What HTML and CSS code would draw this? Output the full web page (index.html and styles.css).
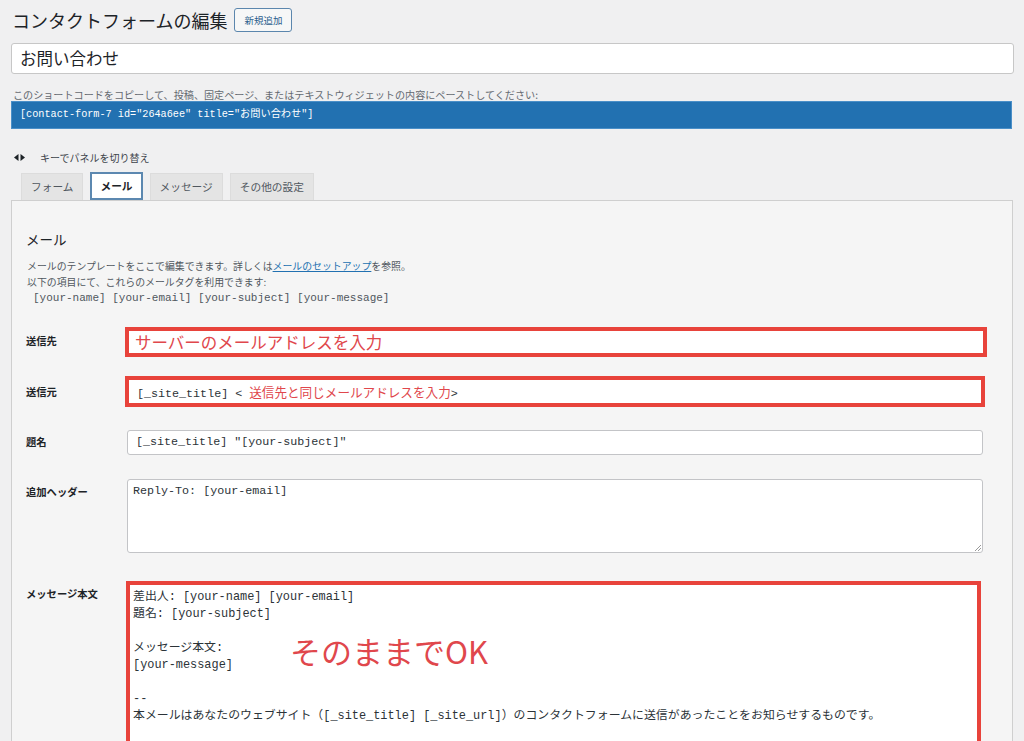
FILE: index.html
```html
<!DOCTYPE html>
<html lang="ja">
<head>
<meta charset="utf-8">
<title>コンタクトフォームの編集</title>
<link rel="stylesheet" href="styles.css">
</head>
<body>
<div class="wrap">
  <div class="page-head">
    <h1 class="page-title">コンタクトフォームの編集</h1>
    <span class="add-btn">新規追加</span>
  </div>
  <div class="title-field">お問い合わせ</div>
  <p class="shortcode-desc">このショートコードをコピーして、投稿、固定ページ、またはテキストウィジェットの内容にペーストしてください:</p>
  <div class="shortcode">[contact-form-7 id="264a6ee" title="お問い合わせ"]</div>
  <div class="key-hint">
    <svg class="key-icon" width="11" height="7" viewBox="0 0 11 7"><path d="M0 3.5 L4.5 0 L4.5 7 Z" fill="#1d2327"/><path d="M11 3.5 L6.5 0 L6.5 7 Z" fill="#1d2327"/></svg>
    <span>キーでパネルを切り替え</span>
  </div>
  <div class="tabs">
    <span class="tab">フォーム</span>
    <span class="tab active">メール</span>
    <span class="tab">メッセージ</span>
    <span class="tab">その他の設定</span>
  </div>
  <div class="panel">
    <h2 class="panel-title">メール</h2>
    <p class="panel-desc">メールのテンプレートをここで編集できます。詳しくは<a class="link">メールのセットアップ</a>を参照。<br>以下の項目にて、これらのメールタグを利用できます:</p>
    <p class="tags">[your-name] [your-email] [your-subject] [your-message]</p>

    <div class="row row-to">
      <div class="label lab-to">送信先</div>
      <div class="field hl hl-to"><span class="red-big">サーバーのメールアドレスを入力</span></div>
    </div>
    <div class="row row-from">
      <div class="label lab-from">送信元</div>
      <div class="field hl hl-from mono">[_site_title] &lt; <span class="red-mid">送信先と同じメールアドレスを入力</span>&gt;</div>
    </div>
    <div class="row row-subj">
      <div class="label lab-subj">題名</div>
      <div class="field plain mono">[_site_title] "[your-subject]"</div>
    </div>
    <div class="row row-head">
      <div class="label lab-head">追加ヘッダー</div>
      <div class="field area mono">Reply-To: [your-email]<span class="grip"></span></div>
    </div>
    <div class="row row-body">
      <div class="label lab-body">メッセージ本文</div>
      <div class="field hl hl-body mono">
        <div class="line">差出人: [your-name] [your-email]</div>
        <div class="line">題名: [your-subject]</div>
        <div class="line blank"></div>
        <div class="line">メッセージ本文:</div>
        <div class="line">[your-message]</div>
        <div class="line blank"></div>
        <div class="line">--</div>
        <div class="line">本メールはあなたのウェブサイト（[_site_title] [_site_url]）のコンタクトフォームに送信があったことをお知らせするものです。</div>
        <span class="ok-note">そのままでOK</span>
      </div>
    </div>
  </div>
</div>
</body>
</html>
```
FILE: styles.css
```css
html, body {
  margin: 0;
  padding: 0;
}
body {
  background: #f0f0f1;
  font-family: "Noto Sans CJK JP", "Noto Sans", sans-serif;
  color: #1d2327;
  height: 741px;
  overflow: hidden;
}
.wrap {
  padding: 0 10px 0 11px;
}
.page-head {
  display: flex;
  align-items: center;
  gap: 7px;
  height: 24px;
  padding-top: 8px;
}
.page-title {
  margin: 0 0 0 1px;
  font-size: 18px;
  font-weight: 400;
  line-height: 24px;
  color: #1d2327;
}
.add-btn {
  display: inline-block;
  box-sizing: border-box;
  height: 24px;
  line-height: 22px;
  padding: 0 9px;
  border: 1px solid #5b86ad;
  border-radius: 3px;
  background: #f6f7f7;
  color: #2a5d8c;
  font-size: 9.5px;
}
.title-field {
  margin-top: 11px;
  box-sizing: border-box;
  height: 31px;
  line-height: 29px;
  border: 1px solid #c7c7c7;
  border-radius: 3px;
  background: #fff;
  padding-left: 8px;
  font-size: 16.5px;
  width: 1003px;
}
.shortcode-desc {
  margin: 14px 0 0 2px;
  font-size: 10.1px;
  line-height: 14px;
  color: #646970;
}
.shortcode {
  margin-top: -1px;
  box-sizing: border-box;
  height: 28px;
  line-height: 26px;
  width: 1001px;
  background: #2271b1;
  border: 1px solid #4a8fc8;
  color: #fff;
  padding-left: 8px;
  font-family: "Liberation Mono", "Noto Sans CJK JP", monospace;
  font-size: 10.2px;
}
.key-hint {
  display: flex;
  align-items: center;
  margin-top: 21px;
  height: 14px;
  font-size: 10px;
  color: #3c434a;
}
.key-icon {
  margin-left: 3px;
  margin-right: 15px;
}
.tabs {
  display: flex;
  gap: 7px;
  margin-top: 8px;
  padding-left: 10px;
  height: 28px;
  align-items: flex-end;
}
.tab {
  box-sizing: border-box;
  height: 27px;
  line-height: 25px;
  padding: 0 9px;
  background: #e4e4e4;
  border: 1px solid #dcdcdc;
  border-bottom: none;
  font-size: 10.7px;
  color: #50575e;
}
.tab.active {
  height: 28px;
  background: #fff;
  border: 2px solid #5c88b0;
  color: #1d2327;
  font-weight: 700;
  line-height: 24px;
  padding: 0 8px;
}
.panel {
  box-sizing: border-box;
  width: 1002px;
  height: 600px;
  background: #f5f5f5;
  border: 1px solid #cfcfcf;
  padding: 0 29px 0 14px;
}
.panel-title {
  margin: 28px 0 0 0;
  font-size: 13.5px;
  font-weight: 400;
  line-height: 20px;
  color: #1d2327;
}
.panel-desc {
  margin: 9px 0 0 1px;
  font-size: 9.9px;
  line-height: 16px;
  color: #50575e;
}
.link {
  color: #2271b1;
  text-decoration: underline;
}
.tags {
  margin: 0 0 0 7px;
  font-family: "Liberation Mono", monospace;
  font-size: 11px;
  line-height: 17px;
  color: #50575e;
}
.row {
  display: flex;
  align-items: flex-start;
}
.label {
  width: 101px;
  flex: none;
  font-size: 10.3px;
  font-weight: 700;
  line-height: 16px;
  color: #1d2327;
}
.field {
  box-sizing: border-box;
  flex: 1;
  background: #fff;
  position: relative;
}
.mono {
  font-family: "Liberation Mono", "Noto Sans CJK JP", monospace;
  font-size: 11.7px;
  color: #2c3338;
}
.plain {
  height: 25px;
  line-height: 23px;
  border: 1px solid #c3c4c7;
  border-radius: 3px;
  padding-left: 8px;
}
.area {
  height: 74px;
  border: 1px solid #c3c4c7;
  border-radius: 3px;
  padding: 3px 5px;
  line-height: 17px;
}
.grip {
  position: absolute;
  right: 1px;
  bottom: 1px;
  width: 6px;
  height: 6px;
  background: linear-gradient(135deg, transparent 45%, #9a9a9a 45%, #9a9a9a 55%, transparent 55%, transparent 70%, #9a9a9a 70%, #9a9a9a 80%, transparent 80%);
}
.hl {
  border: 4px solid #e8433b;
}
.row-to {
  margin-top: 20px;
}
.hl-to {
  height: 30px;
  line-height: 22px;
  margin: 0 -4px 0 -2px;
  padding-left: 6px;
}
.lab-to { padding-top: 6px; }
.red-big {
  color: #e0474c;
  font-family: "Noto Sans CJK JP", sans-serif;
  font-size: 16.5px;
}
.row-from {
  margin-top: 19px;
}
.hl-from {
  height: 31px;
  line-height: 23px;
  margin: 0 -2px 0 -2px;
  padding-left: 8px;
}
.lab-from { padding-top: 8px; }
.red-mid {
  color: #e0474c;
  font-family: "Noto Sans CJK JP", sans-serif;
  font-size: 12.6px;
}
.row-subj {
  margin-top: 23px;
}
.lab-subj { padding-top: 4px; }
.row-head {
  margin-top: 24px;
}
.lab-head { padding-top: 5px; }
.row-body {
  margin-top: 28px;
}
.lab-body { padding-top: 5px; }
.hl-body {
  height: 200px;
  margin: 0 2px 0 -1px;
  padding: 4px 3px;
  line-height: 17px;
  font-size: 11.9px;
}
.line {
  width: max-content;
  height: 17px;
  white-space: pre;
}
.ok-note {
  position: absolute;
  left: 160px;
  top: 48px;
  color: #e0474c;
  font-family: "Noto Sans CJK JP", sans-serif;
  font-size: 31px;
  line-height: 36px;
  font-weight: 400;
}
```
